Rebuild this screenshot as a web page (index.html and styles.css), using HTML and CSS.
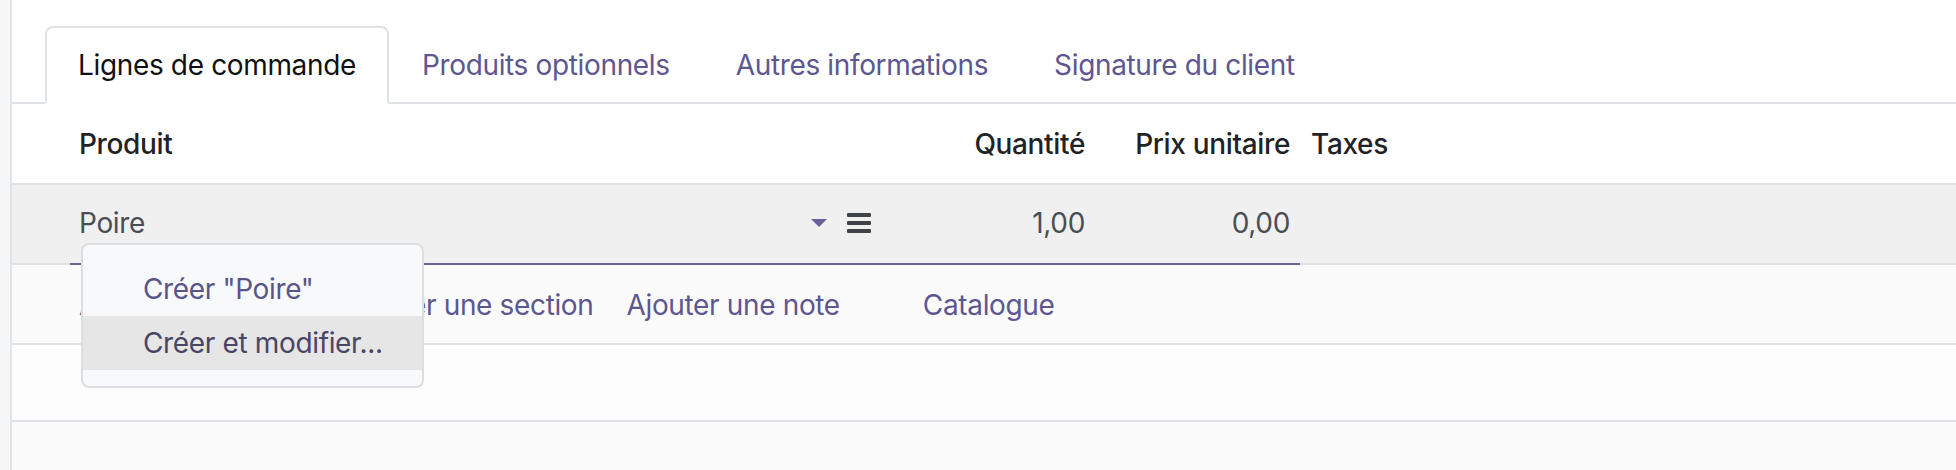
FILE: index.html
```html
<!DOCTYPE html>
<html lang="fr">
<head>
  <meta charset="UTF-8">
  <meta name="viewport" content="width=device-width, initial-scale=1.0">
  <title>Lignes de commande</title>
  <link rel="stylesheet" href="styles.css">
</head>
<body>
  <div class="page">
    <aside class="gutter"></aside>

    <main class="sheet">
      <!-- Notebook tabs -->
      <nav class="tabs">
        <a class="tab active">Lignes de commande</a>
        <a class="tab">Produits optionnels</a>
        <a class="tab">Autres informations</a>
        <a class="tab">Signature du client</a>
      </nav>

      <!-- Order lines -->
      <div class="list">
        <div class="row head">
          <div class="cell lead"></div>
          <div class="cell product">Produit</div>
          <div class="cell qty num">Quantité</div>
          <div class="cell price num">Prix unitaire</div>
          <div class="cell taxes">Taxes</div>
        </div>

        <div class="row line">
          <div class="cell lead"></div>
          <div class="editor">
            <div class="cell product">
              <span class="value">Poire</span>
              <span class="caret"></span>
              <span class="bars"><i></i><i></i><i></i></span>

              <ul class="dropdown">
                <li class="item">Créer "Poire"</li>
                <li class="item hover">Créer et modifier...</li>
              </ul>
            </div>
            <div class="cell qty num">1,00</div>
            <div class="cell price num">0,00</div>
          </div>
          <div class="cell taxes"></div>
        </div>

        <div class="row add">
          <div class="cell lead"></div>
          <div class="links">
            <a>Ajouter un produit</a>
            <a>Ajouter une section</a>
            <a>Ajouter une note</a>
            <a class="catalog">Catalogue</a>
          </div>
        </div>

        <div class="row blank"></div>
        <div class="row blank alt"></div>
      </div>
    </main>
  </div>
</body>
</html>
```

FILE: styles.css
```css
* {
  box-sizing: border-box;
}

body {
  margin: 0;
  font-family: Inter, "Noto Sans", sans-serif;
  font-size: 28px;
  letter-spacing: -0.35px;
  color: #212529;
  background: #fff;
  height: 470px;
  overflow: hidden;
}

.page {
  display: flex;
  height: 470px;
}

.gutter {
  width: 12px;
  flex: none;
  background: #f5f6f8;
  border-right: 2px solid #e2e3e5;
}

.sheet {
  flex: 1;
  padding-top: 26px;
}

/* Tabs */
.tabs {
  display: flex;
  height: 78px;
  padding-left: 33px;
  border-bottom: 2px solid #dee2e6;
}

.tab {
  display: flex;
  align-items: center;
  height: 78px;
  margin-bottom: -2px;
  padding: 0 31px;
  border: 2px solid transparent;
  border-radius: 8px 8px 0 0;
  color: #5d5690;
  white-space: nowrap;
}

.tab.active {
  color: #111;
  background: #fff;
  border-color: #dee2e6 #dee2e6 #fff;
}

/* List */
.row {
  display: flex;
  border-bottom: 2px solid #dee2e6;
}

.cell {
  display: flex;
  align-items: center;
  white-space: nowrap;
}

.lead {
  width: 58px;
  flex: none;
}

.product {
  position: relative;
  width: 830px;
  flex: none;
  padding: 0 29px 0 9px;
}

.qty {
  width: 200px;
  flex: none;
  padding-right: 15px;
}

.price {
  width: 200px;
  flex: none;
  padding-right: 10px;
}

.num {
  justify-content: flex-end;
}

.taxes {
  flex: 1;
  padding-left: 11px;
}

.head {
  height: 81px;
  font-weight: 500;
  color: #1f2326;
}

.line {
  height: 80px;
  background: #f0f0f0;
  color: #4a4e53;
}

.line .cell {
  padding-bottom: 2px;
}

.editor {
  display: flex;
  margin-bottom: -2px;
  border-bottom: 2px solid #6c6396;
}

.value {
  flex: 1;
}

.caret {
  width: 0;
  height: 0;
  margin-right: 20px;
  border-left: 8px solid transparent;
  border-right: 8px solid transparent;
  border-top: 8px solid #6b6198;
}

.bars {
  display: flex;
  flex-direction: column;
  gap: 4px;
}

.bars i {
  display: block;
  width: 24px;
  height: 4px;
  border-radius: 1px;
  background: #3f4348;
}

/* Autocomplete menu */
.dropdown {
  position: absolute;
  left: 11px;
  top: 58px;
  z-index: 5;
  width: 343px;
  margin: 0;
  padding: 17px 0 16px;
  list-style: none;
  background: #f8f9fb;
  border: 2px solid #dcdde0;
  border-radius: 8px;
}

.item {
  height: 54px;
  display: flex;
  align-items: center;
  padding-left: 60px;
  color: #5b5489;
}

.item.hover {
  background: #e6e6e6;
  color: #4a4565;
}

.add {
  height: 80px;
  background: #fbfbfb;
}

.links {
  display: flex;
  align-items: center;
  padding: 2px 0 0 9px;
  color: #5d5690;
  white-space: nowrap;
}

.links a {
  margin-right: 33px;
}

.links .catalog {
  margin-left: 50px;
}

.blank {
  height: 77px;
  background: #fdfdfd;
}

.blank.alt {
  height: 60px;
  background: #fafafa;
  border-bottom: none;
}
```
